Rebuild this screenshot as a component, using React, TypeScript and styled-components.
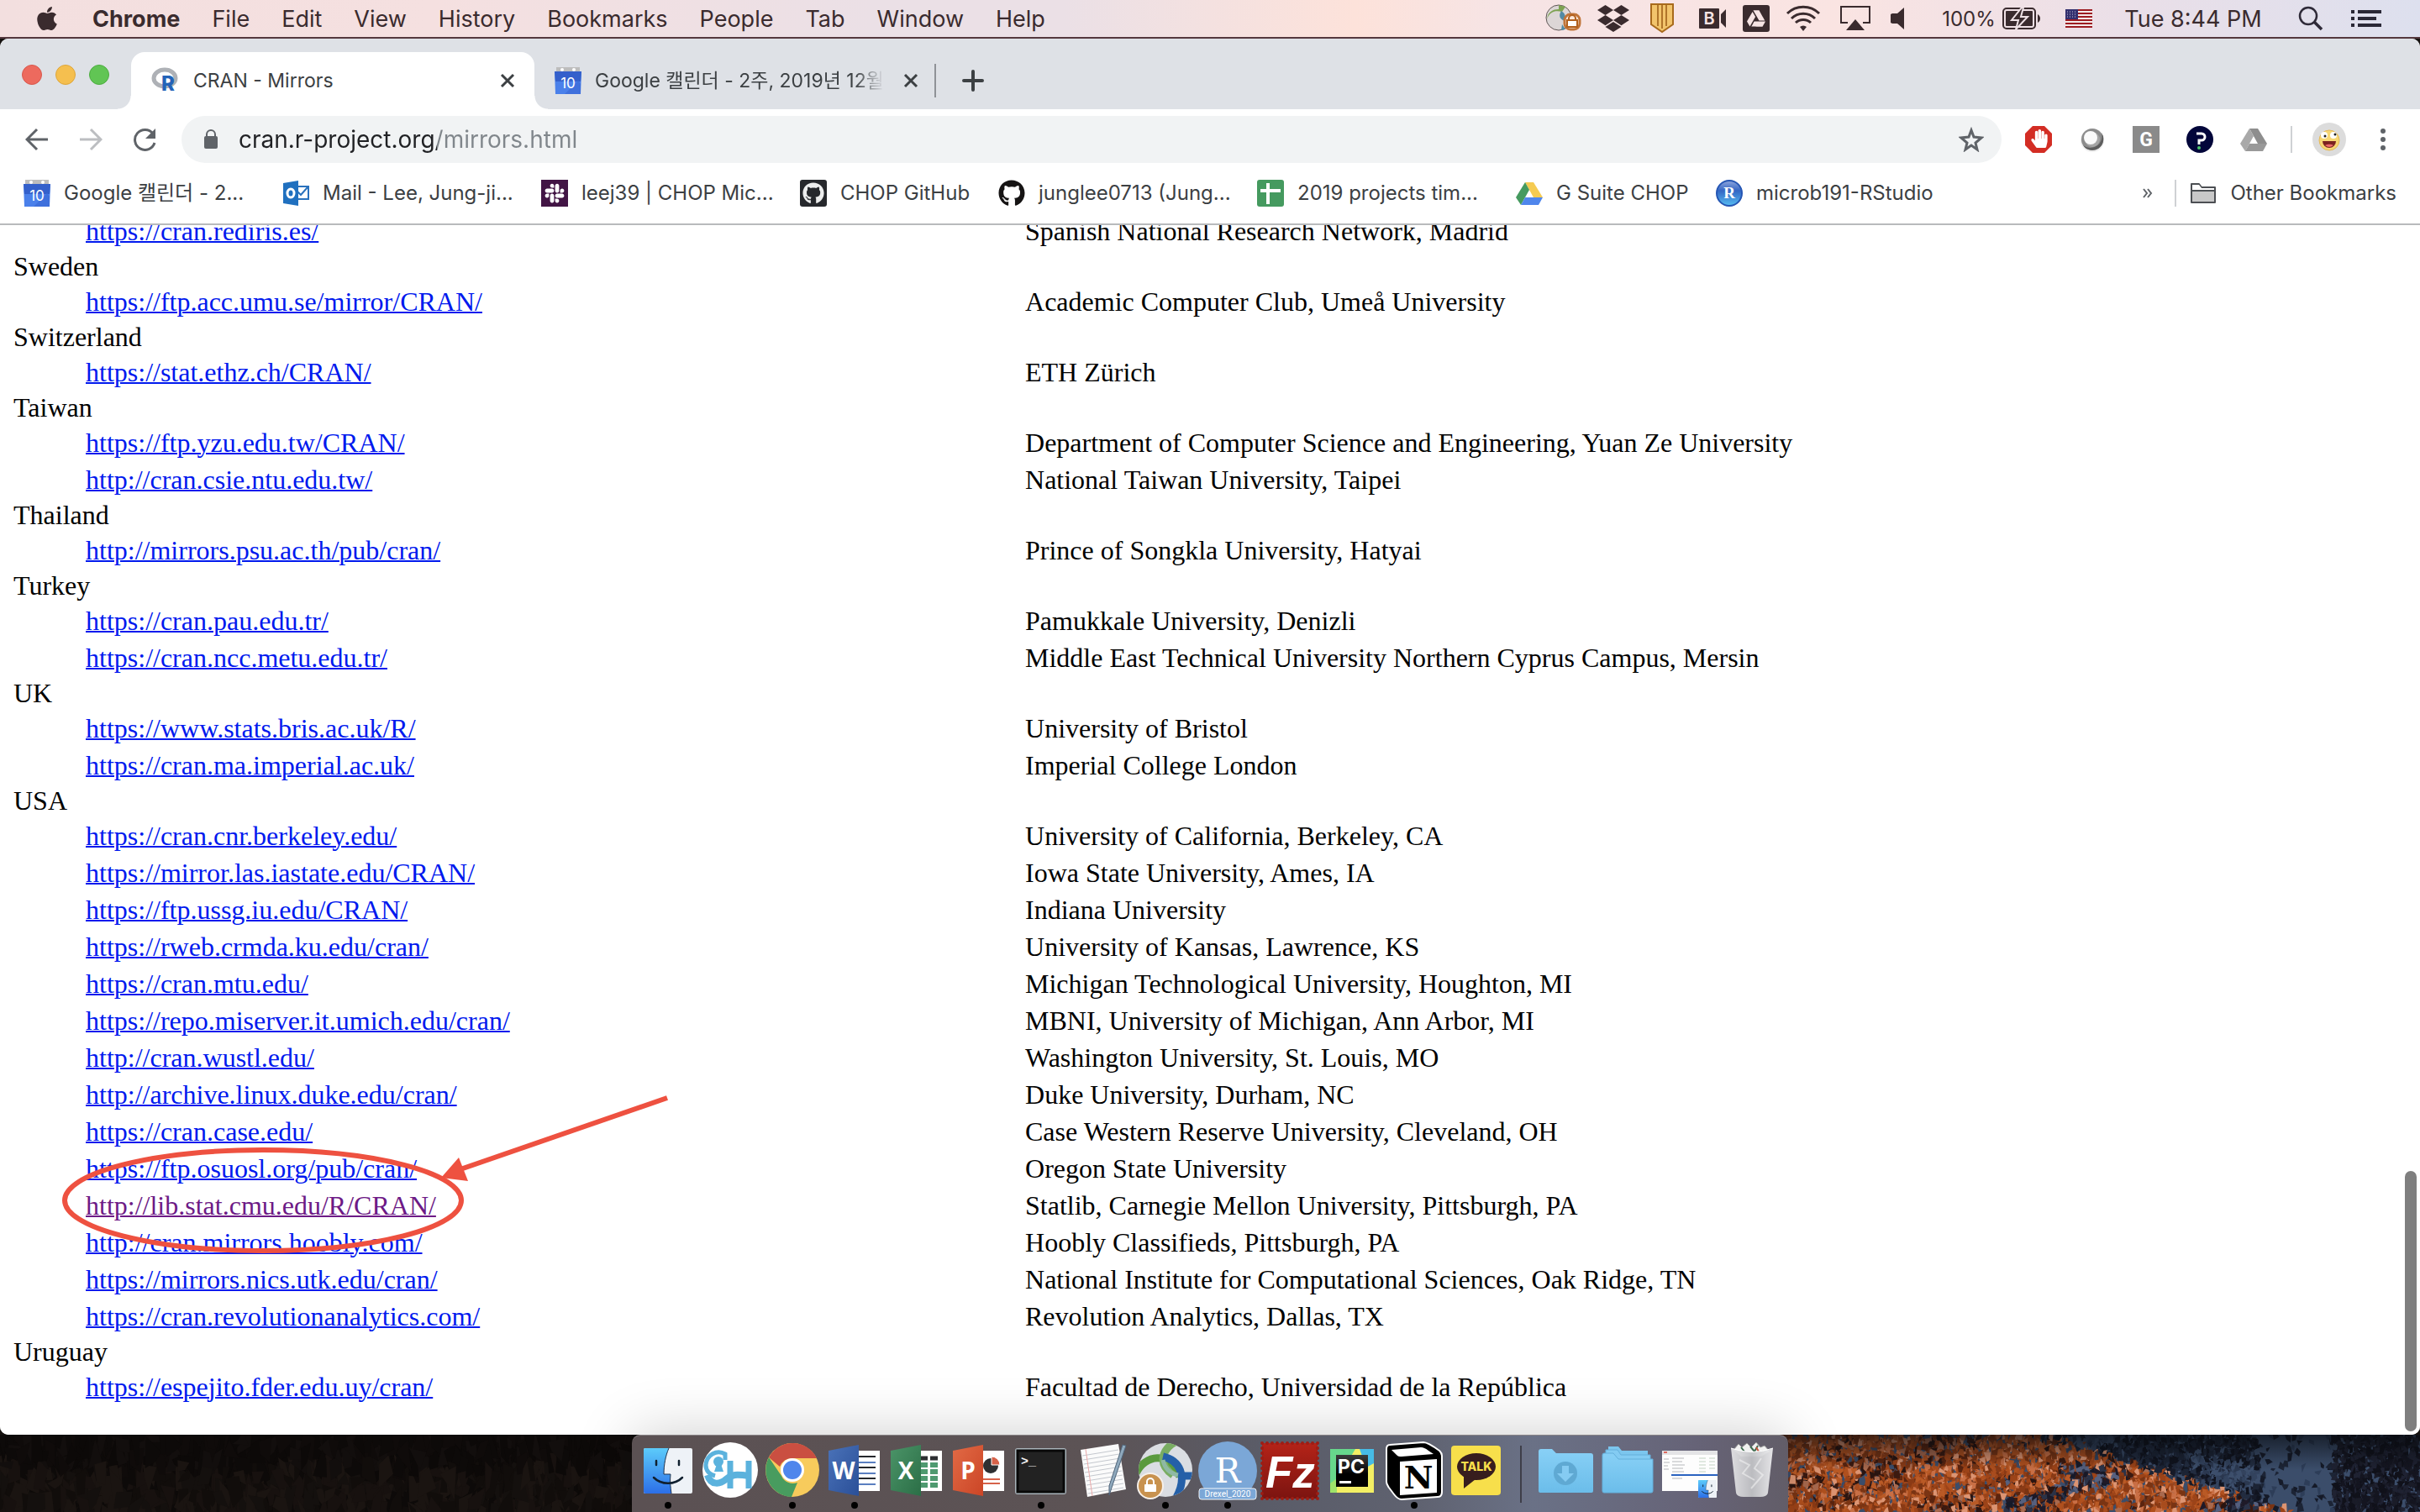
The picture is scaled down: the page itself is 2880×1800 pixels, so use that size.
import React from "react";
import styled, { createGlobalStyle, css } from "styled-components";
import { FaApple, FaDropbox, FaGithub, FaSlack, FaHandPaper } from "react-icons/fa";
import { SiGoogledrive } from "react-icons/si";

const ui = `Inter, "Noto Sans CJK KR", sans-serif`;
const serif = `"Liberation Serif", "Noto Sans CJK KR", serif`;

const GlobalStyle = createGlobalStyle`
  *, *::before, *::after { box-sizing: border-box; }
  body { margin: 0; background: #15110f; }
  svg { display: block; flex: none; }
`;

const Screen = styled.div`
  display: flex;
  flex-direction: column;
  height: 100vh;
  overflow: hidden;
  font-family: ${ui};
`;

const plainButton = css`
  border: 0;
  padding: 0;
  background: none;
  font: inherit;
  color: inherit;
  cursor: default;
`;

/* ---------- menu bar ---------- */

const MenuBar = styled.header`
  flex: none;
  display: flex;
  justify-content: space-between;
  height: 46px;
  padding: 0 32px 0 40px;
  border-bottom: 2px solid #54383e;
  background: linear-gradient(90deg, #f3dfdf 0%, #f5e0e0 18%, #ebe0e6 36%, #ebe0e6 44%, #fde2da 56%, #f6e4e5 62%, #fae4e2 76%, #eadfe8 88%, #dde0ee 100%);
  color: #3a2b2e;
  font-size: 27px;
`;

const Menus = styled.nav`
  display: flex;
  align-items: center;
  gap: 38px;
`;

const Menu = styled.button<{ $strong?: boolean }>`
  ${plainButton}
  display: flex;
  font-weight: ${(p) => (p.$strong ? 700 : 400)};
`;

const StatusArea = styled.div`
  display: flex;
  align-items: center;
`;

const StatusItem = styled.button<{ $width: number }>`
  ${plainButton}
  display: flex;
  align-items: center;
  justify-content: center;
  gap: 8px;
  width: ${(p) => p.$width}px;
  height: 44px;
  white-space: nowrap;
`;

const Percent = styled.span`
  font-size: 24px;
`;

/* ---------- browser window ---------- */

const BrowserWindow = styled.main`
  flex: 1;
  min-height: 0;
  display: flex;
  flex-direction: column;
  border-radius: 10px;
  overflow: hidden;
  background: #fff;
  color: #3c4043;
`;

const TabStrip = styled.div`
  flex: none;
  display: flex;
  align-items: stretch;
  height: 84px;
  padding: 16px 26px 0;
  background: #dee1e6;
`;

const Lights = styled.div`
  display: flex;
  align-items: center;
  gap: 16px;
  padding-bottom: 14px;
  margin-right: 26px;
`;

const Light = styled.button<{ $fill: string; $edge: string }>`
  ${plainButton}
  width: 24px;
  height: 24px;
  border-radius: 50%;
  border: 1px solid ${(p) => p.$edge};
  background: ${(p) => p.$fill};
`;

const Tab = styled.div<{ $active?: boolean }>`
  position: relative;
  display: flex;
  align-items: center;
  gap: 16px;
  width: 480px;
  padding: 0 16px 0 24px;
  font-size: 23px;
  line-height: 32px;
  ${(p) =>
    p.$active &&
    css`
      background: #fff;
      border-radius: 16px 16px 0 0;
      &::before,
      &::after {
        content: "";
        position: absolute;
        bottom: 0;
        width: 16px;
        height: 16px;
      }
      &::before {
        right: 100%;
        background: radial-gradient(circle at 0 0, transparent 15px, #fff 16px);
      }
      &::after {
        left: 100%;
        background: radial-gradient(circle at 100% 0, transparent 15px, #fff 16px);
      }
    `}
`;

const TabTitle = styled.button<{ $fade?: boolean }>`
  ${plainButton}
  flex: 1;
  min-width: 0;
  overflow: hidden;
  white-space: nowrap;
  text-align: left;
  ${(p) => p.$fade && css`mask-image: linear-gradient(90deg, #000 90%, transparent 100%);`}
`;

const IconButton = styled.button`
  ${plainButton}
  flex: none;
  display: flex;
  align-items: center;
  justify-content: center;
  width: 32px;
  height: 32px;
`;

const TabDivider = styled.span`
  align-self: center;
  width: 2px;
  height: 40px;
  margin: 0 28px 0 -4px;
  background: #8f9297;
`;

const NewTab = styled(IconButton)`
  align-self: center;
`;

const Toolbar = styled.div`
  flex: none;
  display: flex;
  align-items: center;
  gap: 28px;
  padding: 8px 28px 0;
`;

const IconGroup = styled.div`
  display: flex;
  align-items: center;
  gap: 32px;
`;

const AddressBar = styled.label`
  flex: 1;
  display: flex;
  align-items: center;
  gap: 24px;
  height: 56px;
  padding: 0 20px 0 26px;
  border-radius: 28px;
  background: #f1f3f4;
`;

const AddressInput = styled.input`
  flex: 1;
  min-width: 0;
  height: 40px;
  padding: 0;
  border: 0;
  outline: 0;
  font-family: ${ui};
  font-size: 28px;
  color: transparent;
  background: linear-gradient(90deg, #202124 236px, #80868b 236px);
  background-clip: text;
`;

const Profile = styled.div`
  display: flex;
  align-items: center;
  gap: 24px;
`;

const ThinLine = styled.span`
  width: 2px;
  height: 32px;
  background: #cfd1d4;
`;

const Avatar = styled(IconButton)`
  width: 40px;
  height: 40px;
`;

const BookmarkBar = styled.nav`
  flex: none;
  display: flex;
  align-items: center;
  gap: 32px;
  height: 74px;
  padding: 0 28px;
  border-bottom: 2px solid #b8babc;
  font-size: 24px;
  line-height: 32px;
`;

const Bookmark = styled.a<{ $width?: number }>`
  display: flex;
  align-items: center;
  gap: 16px;
  width: ${(p) => (p.$width ? `${p.$width}px` : "auto")};
  color: #3c4043;
  text-decoration: none;
  white-space: nowrap;
`;

const BookmarkEnd = styled.div`
  display: flex;
  align-items: center;
  gap: 16px;
  margin-left: auto;
`;

/* ---------- page ---------- */

const Viewport = styled.div`
  position: relative;
  flex: 1;
  min-height: 0;
  display: flex;
  flex-direction: column;
  justify-content: flex-end;
  overflow: hidden;
  padding: 0 20px 33px 16px;
  background: #fff;
  color: #000;
  font-family: ${serif};
  font-size: 32px;
  line-height: 36px;
`;

const MirrorList = styled.dl`
  flex: none;
  margin: 0;
`;

const Country = styled.dt``;

const MirrorGroup = styled.dd`
  margin: 0 0 0 80px;
`;

const MirrorTable = styled.table`
  width: 90%;
  table-layout: fixed;
  border-spacing: 4px;
`;

const MirrorCell = styled.td<{ $share: number }>`
  width: ${(p) => p.$share}%;
  padding: 2px;
  white-space: nowrap;
`;

const MirrorLink = styled.a<{ $visited?: boolean }>`
  color: ${(p) => (p.$visited ? "#6d1a86" : "#0019ee")};
  text-decoration: underline;
  text-decoration-thickness: 2px;
`;

const ScrollThumb = styled.div`
  position: absolute;
  right: 4px;
  bottom: 4px;
  width: 14px;
  height: 310px;
  border-radius: 7px;
  background: #7f7f7f;
`;

const Annotation = styled.svg`
  position: absolute;
  left: 60px;
  bottom: 208px;
`;

/* ---------- dock ---------- */

const Desktop = styled.footer`
  flex: none;
  display: flex;
  height: 92px;
  background: linear-gradient(90deg, #0d0a09 50%, #3a2018 50%);
`;

const Scenery = styled.svg`
  flex: 1 1 0;
  min-width: 0;
  height: 92px;
`;

const Dock = styled.div`
  position: relative;
  display: flex;
  padding: 0 6px;
  border-radius: 10px 10px 0 0;
  border-top: 1px solid #8a8587;
  background: linear-gradient(90deg, #5b5153 0%, #5c5355 40%, #5a5c68 55%, #5f6270 68%, #6a7186 78%, #666377 92%, #625d68 100%);
  box-shadow: 0 0 70px rgba(0, 0, 0, 0.2);
`;

const DockItem = styled.button`
  ${plainButton}
  display: flex;
  flex-direction: column;
  align-items: center;
  width: 74px;
`;

const RunningDot = styled.span`
  width: 8px;
  height: 8px;
  border-radius: 50%;
  background: #000;
`;

const DockDivider = styled.span`
  width: 2px;
  height: 68px;
  margin: 12px 15px 0;
  background: #3e3e49;
`;

/* ---------- small icons ---------- */

const Calendar = () => (
  <svg width="32" height="32" viewBox="0 0 32 32">
    <path d="M2 0h28v6H2z" fill="#bdbdbd" />
    <circle cx="9" cy="3" r="2" fill="#fff" />
    <circle cx="23" cy="3" r="2" fill="#fff" />
    <path d="M0 5h32l-1 27H1z" fill="#4a80ea" />
    <path d="M0 5h32l-1 12H1z" fill="#3460cb" />
    <path d="M20 24l8-8 3 4v12H12z" fill="#3f70dc" />
    <text x="16" y="25" textAnchor="middle" fontFamily={ui} fontSize="17" fill="#fff">10</text>
  </svg>
);

const RLogo = () => (
  <svg width="34" height="36" viewBox="0 0 34 36">
    <ellipse cx="16" cy="15" rx="13" ry="10" fill="none" stroke="#aeb1b6" strokeWidth="5" />
    <text x="12" y="30" fontFamily="Inter, sans-serif" fontWeight="800" fontSize="24" fill="#2363b8">R</text>
  </svg>
);

const Outlook = () => (
  <svg width="32" height="32" viewBox="0 0 32 32">
    <path d="M16 8h15v15H16z" fill="#fff" stroke="#2a72bd" strokeWidth="2" />
    <path d="M17 13l5 5 8-9" fill="none" stroke="#2a72bd" strokeWidth="2" />
    <path d="M1 4l18-3v30L1 28z" fill="#2070bf" />
    <ellipse cx="10" cy="16" rx="4" ry="5" fill="none" stroke="#fff" strokeWidth="3" />
  </svg>
);

const SlackTile = () => (
  <svg width="32" height="32" viewBox="0 0 32 32">
    <rect width="32" height="32" fill="#421545" />
    <FaSlack x="3" y="3" size={26} color="#fff" />
  </svg>
);

const GithubTile = () => (
  <svg width="32" height="32" viewBox="0 0 32 32">
    <rect width="32" height="32" rx="3" fill="#26282c" />
    <FaGithub x="3" y="3" size={26} color="#eceded" />
  </svg>
);

const Sheets = () => (
  <svg width="32" height="32" viewBox="0 0 32 32">
    <rect width="32" height="32" rx="3" fill="#459a5f" />
    <path d="M11 4h4v7h13v4H15v14h-4V15H4v-4h7z" fill="#fff" />
  </svg>
);

const DriveColor = ({ grey }: { grey?: boolean }) => (
  <svg width="32" height="32" viewBox="0 0 32 32">
    <path d="M11 3h10l11 18H21z" fill={grey ? "#8e8e8e" : "#f5cb52"} />
    <path d="M11 3l5 9L6 30 0 21z" fill={grey ? "#a9a9a9" : "#459a5f"} />
    <path d="M11 21h21l-5 9H6z" fill={grey ? "#999" : "#4f86ec"} />
  </svg>
);

const RStudioOrb = () => (
  <svg width="32" height="32" viewBox="0 0 32 32">
    <defs>
      <linearGradient id="orb" x1="0" y1="0" x2="0" y2="1">
        <stop offset="0" stopColor="#8fa6dc" />
        <stop offset=".4" stopColor="#3366c4" />
        <stop offset="1" stopColor="#57bdf2" />
      </linearGradient>
    </defs>
    <circle cx="16" cy="16" r="15" fill="url(#orb)" stroke="#2556b4" strokeWidth="2" />
    <text x="16" y="22" textAnchor="middle" fontFamily="Liberation Serif, serif" fontWeight="700" fontSize="19" fill="#fff">R</text>
  </svg>
);

const Folder = () => (
  <svg width="32" height="26" viewBox="0 0 32 26">
    <path d="M2 2h9l3 4h16v18H2z" fill="#c8c8c8" stroke="#4c4f53" strokeWidth="2" strokeLinejoin="round" />
    <path d="M3 3h8l3 4h15v2H3z" fill="#fff" />
    <path d="M2 10h28" stroke="#4c4f53" strokeWidth="2" />
  </svg>
);

const Close = () => (
  <svg width="18" height="18" viewBox="0 0 18 18">
    <path d="M2 2l14 14M16 2L2 16" stroke="#3c4043" strokeWidth="3" />
  </svg>
);

const Plus = () => (
  <svg width="26" height="26" viewBox="0 0 26 26">
    <path d="M13 2v22M2 13h22" stroke="#3c4043" strokeWidth="4" strokeLinecap="round" />
  </svg>
);

const Arrow = ({ forward }: { forward?: boolean }) => (
  <svg width="28" height="28" viewBox="0 0 28 28">
    <path
      d={forward ? "M1 14h24M14 2l12 12-12 12" : "M27 14H3M14 2L2 14l12 12"}
      fill="none"
      stroke={forward ? "#bcbec1" : "#5f6368"}
      strokeWidth="3"
    />
  </svg>
);

const Reload = () => (
  <svg width="30" height="30" viewBox="0 0 30 30">
    <path d="M25 8a12 12 0 1 0 2 11" fill="none" stroke="#5f6368" strokeWidth="3" />
    <path d="M28 2v12H16z" fill="#5f6368" />
  </svg>
);

const Lock = () => (
  <svg width="18" height="24" viewBox="0 0 18 24">
    <path d="M4 10V6a5 5 0 0 1 10 0v4" fill="none" stroke="#5f6368" strokeWidth="2" />
    <rect x="1" y="8" width="16" height="15" rx="2" fill="#5f6368" />
  </svg>
);

const Star = () => (
  <svg width="30" height="30" viewBox="0 0 30 30">
    <path d="M15 4l3 8 9 1-7 6 2 8-7-5-7 5 2-8-7-6 9-1z" fill="none" stroke="#5f6368" strokeWidth="3" />
  </svg>
);

const AdBlock = () => (
  <svg width="32" height="32" viewBox="0 0 32 32">
    <path d="M9 0h14l9 9v14l-9 9H9l-9-9V9z" fill="#d32d24" />
    <FaHandPaper x="6" y="4" size={22} color="#fff" />
  </svg>
);

const GreyOrb = () => (
  <svg width="32" height="32" viewBox="0 0 32 32">
    <circle cx="16" cy="17" r="14" fill="#eee" />
    <circle cx="16" cy="16" r="13" fill="#8c8c8c" />
    <path d="M27 8a13 13 0 0 1-22 15 14 14 0 0 0 22-15z" fill="#5e5e5e" />
    <circle cx="16" cy="16" r="9" fill="#a6a6a6" />
    <circle cx="14" cy="14" r="8" fill="#fafafa" />
  </svg>
);

const GTile = () => (
  <svg width="32" height="32" viewBox="0 0 32 32">
    <rect width="32" height="32" fill="#8a8a8a" />
    <text x="16" y="24" textAnchor="middle" fontFamily="Roboto, sans-serif" fontWeight="700" fontSize="23" fill="#fff">G</text>
  </svg>
);

const QuestionOrb = () => (
  <svg width="32" height="32" viewBox="0 0 32 32">
    <circle cx="16" cy="16" r="16" fill="#02063a" />
    <path d="M12 9h6a4 4 0 0 1 0 8h-3v5" fill="none" stroke="#fff" strokeWidth="3" />
    <circle cx="15" cy="26" r="2" fill="#4cc76a" />
  </svg>
);

const Smiley = () => (
  <svg width="40" height="40" viewBox="0 0 40 40">
    <circle cx="20" cy="20" r="20" fill="#dcdcdc" />
    <circle cx="20" cy="21" r="12" fill="#f7d774" stroke="#e5b95a" strokeWidth="1" />
    <circle cx="14" cy="15" r="4" fill="#fff" />
    <circle cx="25" cy="15" r="4" fill="#fff" />
    <circle cx="15" cy="16" r="1.5" fill="#222" />
    <circle cx="27" cy="14" r="1.5" fill="#222" />
    <path d="M12 22h16a8 8 0 0 1-16 0z" fill="#7c2320" />
    <path d="M15 27a7 4 0 0 1 10 0 8 8 0 0 1-10 0z" fill="#ee6a6a" />
  </svg>
);

const Dots = () => (
  <svg width="8" height="28" viewBox="0 0 8 28" fill="#5f6368">
    <circle cx="4" cy="4" r="3" />
    <circle cx="4" cy="14" r="3" />
    <circle cx="4" cy="24" r="3" />
  </svg>
);

const Chevrons = () => (
  <svg width="12" height="12" viewBox="0 0 12 12">
    <path d="M1 1l4 5-4 5M6 1l4 5-4 5" fill="none" stroke="#5f6368" strokeWidth="2" />
  </svg>
);

/* ---------- menu bar icons ---------- */

const VpnStatus = () => (
  <svg width="44" height="34" viewBox="0 0 44 34">
    <circle cx="16" cy="16" r="15" fill="#dcd6d6" stroke="#5f5655" strokeWidth="1" />
    <path d="M2 18C5 8 13 7 20 9l4-6-8-2v5C9 6 3 9 2 18z" fill="#7da252" />
    <path d="M19 8c-4 6-1 11 5 12 0-6 0-9-5-12zM20 24l4 6-5 1z" fill="#528aa4" />
    <rect x="23" y="12" width="18" height="18" rx="7" fill="#fbe6d8" stroke="#c0753a" strokeWidth="3" />
    <path d="M28 19v-2a4 4 0 0 1 8 0v2" fill="none" stroke="#b2611f" strokeWidth="2" />
    <rect x="26" y="19" width="12" height="8" fill="#fff" stroke="#b2611f" strokeWidth="2" />
  </svg>
);

const ShieldStatus = () => (
  <svg width="30" height="36" viewBox="0 0 30 36">
    <path d="M2 1h26v24L15 34 2 25z" fill="#f2c46c" stroke="#a86a1c" strokeWidth="2" />
    <path d="M10 2v25M15 2v28M20 2v25" stroke="#b0752a" strokeWidth="2" />
  </svg>
);

const RecordStatus = () => (
  <svg width="32" height="26" viewBox="0 0 32 26">
    <rect y="1" width="24" height="24" rx="1" fill="#3a2b2e" />
    <text x="12" y="20" textAnchor="middle" fontFamily={ui} fontWeight="600" fontSize="20" fill="#f6e4e4">B</text>
    <path d="M26 8l6-6v22l-6-6z" fill="#3a2b2e" />
  </svg>
);

const DriveStatus = () => (
  <svg width="32" height="32" viewBox="0 0 32 32">
    <rect width="32" height="32" rx="3" fill="#3a2b2e" />
    <SiGoogledrive x="5" y="5" size={22} color="#f6e4e4" />
  </svg>
);

const WifiStatus = () => (
  <svg width="42" height="32" viewBox="0 0 42 32" fill="none" stroke="#3a2b2e" strokeWidth="3">
    <path d="M2 10a27 27 0 0 1 38 0M7 16a20 20 0 0 1 28 0M12 21a13 13 0 0 1 18 0" />
    <path d="M17 26a6 6 0 0 1 8 0l-4 5z" fill="#3a2b2e" stroke="none" />
  </svg>
);

const AirPlayStatus = () => (
  <svg width="36" height="30" viewBox="0 0 36 30">
    <path d="M9 20H1V1h34v19h-8" fill="none" stroke="#3a2b2e" strokeWidth="2" />
    <path d="M18 16l11 13H7z" fill="#3a2b2e" />
  </svg>
);

const SpeakerStatus = () => (
  <svg width="32" height="26" viewBox="0 0 32 26">
    <path d="M0 8l2-1h6l8-7v26l-8-7H2l-2-1z" fill="#3a2b2e" />
  </svg>
);

const BatteryStatus = () => (
  <svg width="46" height="26" viewBox="0 0 46 26">
    <rect x="1" y="1" width="38" height="24" rx="4" fill="none" stroke="#3a2b2e" strokeWidth="2" />
    <rect x="4" y="4" width="32" height="18" rx="1" fill="#3a2b2e" />
    <path d="M42 8c4 2 4 8 0 10z" fill="#3a2b2e" />
    <path d="M23 0L11 15h8l-3 11 14-15h-8l3-11z" fill="#3a2b2e" stroke="#efe2e6" strokeWidth="2" />
  </svg>
);

const FlagStatus = () => (
  <svg width="32" height="22" viewBox="0 0 32 22">
    <rect width="32" height="22" fill="#f4eaea" />
    {[0, 4, 8, 12, 16, 20].map((y) => (
      <rect key={y} y={y} width="32" height="2" fill="#9c1c22" />
    ))}
    <rect width="15" height="12" fill="#33306f" />
    <path d="M2 3h12M2 6h12M2 9h12" stroke="#c9c7dd" strokeWidth="1" strokeDasharray="1 2" />
  </svg>
);

const SearchStatus = () => (
  <svg width="30" height="30" viewBox="0 0 30 30" fill="none" stroke="#2e2a38">
    <circle cx="12" cy="12" r="10" strokeWidth="2.5" />
    <path d="M19 19l9 9" strokeWidth="3.5" />
  </svg>
);

const ListStatus = () => (
  <svg width="36" height="20" viewBox="0 0 36 20" fill="#2a2836">
    <path d="M0 0h4v4H0zM0 8h4v4H0zM0 16h4v4H0zM8 0h28v4H8zM8 8h22v4H8zM8 16h28v4H8z" />
  </svg>
);

/* ---------- dock icons ---------- */

const dockSize = { width: 74, height: 79, viewBox: "0 1 74 79" };

const FinderFace = () => (
  <>
    <defs>
      <linearGradient id="finderLeft" x1="0" y1="0" x2="0" y2="1">
        <stop offset="0" stopColor="#5ccbfa" />
        <stop offset="1" stopColor="#2c6fe8" />
      </linearGradient>
    </defs>
    <rect x="8" y="16" width="58" height="54" rx="2" fill="#eef2f7" />
    <path d="M10 16h28c-4 9-6 20-6 31h8c-1 8 0 16 1 23H10a2 2 0 0 1-2-2V18a2 2 0 0 1 2-2z" fill="url(#finderLeft)" />
    <path d="M38 16c-4 9-6 20-6 31h8c-1 8 0 16 1 23" fill="none" stroke="#20344e" strokeWidth="1" />
    <path d="M23 31v5M50 31v5" stroke="#10202f" strokeWidth="2.5" strokeLinecap="round" />
    <path d="M20 51c9 9 25 9 34 0" fill="none" stroke="#10202f" strokeWidth="2.5" strokeLinecap="round" />
  </>
);

const Finder = () => <svg {...dockSize}><FinderFace /></svg>;

const Chop = () => (
  <svg {...dockSize}>
    <circle cx="37" cy="42" r="33" fill="#fff" />
    <g fill="none" stroke="#5bb2dd">
      <path d="M31 30V23C21 17 9 24 8 36c0 7 4 11 11 13" strokeWidth="5" />
      <path d="M10 48c4 13 15 11 22 5s12-6 28-4" strokeWidth="8" />
      <path d="M37 31v33M59 31v33" strokeWidth="7" />
    </g>
    <circle cx="23" cy="32" r="6" fill="#5bb2dd" />
    <path d="M18 44h11l-3-9h-5z" fill="#5bb2dd" />
  </svg>
);

const Chrome = () => (
  <svg {...dockSize}>
    <circle cx="37" cy="42" r="32" fill="#f7cb5c" />
    <path d="M9 27A32 32 0 0 1 66 28H37a15 15 0 0 0-15 10z" fill="#ca4f41" />
    <path d="M9 27l15 22a15 15 0 0 0 19 8L36 74A32 32 0 0 1 9 27z" fill="#489c5f" />
    <circle cx="37" cy="42" r="14" fill="#fff" />
    <circle cx="37" cy="42" r="11" fill="#4f86ec" />
  </svg>
);

type OfficeProps = { letter: string; from: string; to: string; children: React.ReactNode };

const Office = ({ letter, from, to, children }: OfficeProps) => (
  <svg {...dockSize}>
    <defs>
      <linearGradient id={`office${letter}`} x1="0" y1="0" x2="1" y2="1">
        <stop offset="0" stopColor={from} />
        <stop offset="1" stopColor={to} />
      </linearGradient>
    </defs>
    <rect x="40" y="19" width="27" height="48" fill="#fff" />
    {children}
    <path d="M6 19l36-7v61L6 66z" fill={`url(#office${letter})`} />
    <text x="24" y="53" textAnchor="middle" fontFamily="Open Sans, sans-serif" fontWeight="700" fontSize="28" fill="#fff">{letter}</text>
  </svg>
);

const Word = () => (
  <Office letter="W" from="#4a72b8" to="#2a4f98">
    <path d="M42 26h20M42 39h20M42 52h20" stroke="#26282c" strokeWidth="2" />
    <path d="M42 33h20M42 46h20M42 59h20" stroke="#5a7fc0" strokeWidth="2" />
  </Office>
);

const Excel = () => (
  <Office letter="X" from="#4b9468" to="#2b6e46">
    <path d="M42 28h8M53 28h9" stroke="#2d2f32" strokeWidth="5" />
    <path d="M42 36h8M53 36h9M42 44h8M53 44h9M42 52h8M53 52h9M42 60h8M53 60h9" stroke="#4f9a70" strokeWidth="6" />
  </Office>
);

const PowerPoint = () => (
  <Office letter="P" from="#e26a45" to="#cb4526">
    <circle cx="51" cy="37" r="9" fill="#2d2f32" />
    <path d="M52 36V26a10 10 0 0 1 10 10z" fill="#d6624a" stroke="#fff" strokeWidth="1" />
    <path d="M42 53h20M42 58h20" stroke="#d6624a" strokeWidth="2" />
  </Office>
);

const Terminal = () => (
  <svg {...dockSize}>
    <rect x="7" y="17" width="59" height="53" rx="2" fill="#222" stroke="#a9b4ba" strokeWidth="2" />
    <rect x="9" y="19" width="55" height="49" fill="none" stroke="#080808" strokeWidth="3" />
    <text x="13" y="36" fontFamily="Liberation Mono, monospace" fontWeight="700" fontSize="15" fill="#f2f2f2">&gt;_</text>
  </svg>
);

const TextEdit = () => (
  <svg {...dockSize}>
    <path d="M10 18l45-7 9 54-46 9z" fill="#fbfbfb" />
    <path d="M12 25l43-7M13 30l43-7M14 35l43-7M14 40l43-7M15 45l43-7M16 50l43-7M17 55l43-7M17 60l43-7M18 65l43-7M19 70l42-7" stroke="#c4c8ce" strokeWidth="1" />
    <path d="M16 17l8 56" stroke="#eaa8a8" strokeWidth="1" />
    <path d="M60 12l4 1-17 50-3 9 0-11z" fill="#8fa9bd" stroke="#50657a" strokeWidth="1" />
  </svg>
);

const Padlock = ({ x, y }: { x: number; y: number }) => (
  <g transform={`translate(${x} ${y})`}>
    <path d="M-4 0v-4a4 4 0 0 1 8 0v4" fill="none" stroke="#fff" strokeWidth="2" />
    <rect x="-7" y="-1" width="14" height="9" rx="1" fill="#fff" />
  </g>
);

const AnyConnect = () => (
  <svg {...dockSize}>
    <defs>
      <clipPath id="globe"><circle cx="37" cy="42" r="32" /></clipPath>
    </defs>
    <circle cx="37" cy="42" r="32" fill="#dadde2" />
    <g clipPath="url(#globe)" fill="none" strokeWidth="9">
      <path d="M2 46C12 24 42 18 54 50" stroke="#5a9a3e" />
      <path d="M50 8C34 16 26 34 46 48" stroke="#79ad62" />
      <path d="M34 26c18 4 32 22 14 52M54 49h18" stroke="#2560a8" />
      <path d="M34 30c2 10 8 16 18 18" stroke="#8fb9a4" strokeWidth="5" />
    </g>
    <circle cx="19" cy="61" r="15" fill="#c8924f" stroke="#f6f0ea" strokeWidth="2" />
    <Padlock x={19} y={60} />
  </svg>
);

const RStudio = () => (
  <svg {...dockSize}>
    <circle cx="37" cy="43" r="35" fill="#7ba7d7" />
    <text x="37" y="57" textAnchor="middle" fontFamily="DejaVu Serif, serif" fontSize="41" fill="#fff">R</text>
    <rect x="3" y="64" width="68" height="13" rx="3" fill="#7ba7d7" stroke="#f2f6fb" strokeWidth="1" />
    <text x="37" y="74" textAnchor="middle" fontFamily="Roboto, sans-serif" fontSize="10" fill="#fff">Drexel_2020</text>
  </svg>
);

const FileZilla = () => (
  <svg {...dockSize}>
    <defs>
      <linearGradient id="zilla" x1="0" y1="0" x2="0" y2="1">
        <stop offset="0" stopColor="#b42318" />
        <stop offset="1" stopColor="#7c1410" />
      </linearGradient>
    </defs>
    <rect x="4" y="10" width="66" height="66" fill="url(#zilla)" />
    <rect x="4" y="10" width="66" height="66" fill="none" stroke="#9c1d15" strokeWidth="4" strokeDasharray="0 6" strokeLinecap="round" />
    <text x="8" y="63" fontFamily="Liberation Sans, sans-serif" fontWeight="700" fontStyle="italic" fontSize="53" fill="#fff">Fz</text>
  </svg>
);

const PyCharm = () => (
  <svg {...dockSize}>
    <defs>
      <linearGradient id="pyShade" x1="0" y1="0" x2="0" y2="1">
        <stop offset="0" stopColor="#3c3c3c" />
        <stop offset=".6" stopColor="#000" />
      </linearGradient>
    </defs>
    <rect x="11" y="17" width="52" height="52" fill="#f3ef64" />
    <path d="M11 17h30L18 55l-7 5z" fill="#67d78c" />
    <path d="M11 58l8-6v17h-8z" fill="#9ee36a" />
    <path d="M46 17h17v17l-9 5z" fill="#46bbe6" />
    <rect x="18" y="24" width="38" height="38" fill="url(#pyShade)" />
    <text x="20" y="46" fontFamily={ui} fontWeight="700" fontSize="23" fill="#fff">PC</text>
    <rect x="22" y="55" width="14" height="3" fill="#fff" />
  </svg>
);

const Notion = () => (
  <svg {...dockSize}>
    <path d="M8 12l40-3c4 0 8 2 19 10 2 2 3 3 3 6v43c0 4-1 6-5 6l-43 3c-4 0-6-2-9-6l-6-8c-2-3-3-4-3-7V17c0-3 1-5 4-5z" fill="#000" stroke="#fff" strokeWidth="2" />
    <path d="M10 18l35-3c3 0 5 1 9 4l6 4-38 3c-3 0-4 0-6-2z" fill="#fff" />
    <path d="M20 32l44-3v40l-44 3z" fill="#fff" />
    <text x="42" y="64" textAnchor="middle" fontFamily="DejaVu Serif, serif" fontWeight="700" fontSize="38" fill="#000">N</text>
  </svg>
);

const KakaoTalk = () => (
  <svg {...dockSize}>
    <rect x="7" y="13" width="59" height="59" rx="4" fill="#f7df4b" />
    <ellipse cx="37" cy="38" rx="23" ry="16" fill="#371d1e" />
    <path d="M22 48l0 16 14-11z" fill="#371d1e" />
    <text x="37" y="43" textAnchor="middle" fontFamily={ui} fontWeight="800" fontSize="14" fill="#f7df4b">TALK</text>
  </svg>
);

const FolderPaint = () => (
  <defs>
    <linearGradient id="folderFill" x1="0" y1="0" x2="0" y2="1">
      <stop offset="0" stopColor="#88d0f6" />
      <stop offset="1" stopColor="#6bbdea" />
    </linearGradient>
  </defs>
);

const Downloads = () => (
  <svg {...dockSize}>
    <FolderPaint />
    <path d="M5 20a3 3 0 0 1 3-3h13l5 5h41a3 3 0 0 1 3 3v42a2 2 0 0 1-2 2H7a2 2 0 0 1-2-2z" fill="url(#folderFill)" />
    <circle cx="37" cy="46" r="14" fill="#5fa9d3" />
    <path d="M33 37h8v9h6L37 56 27 46h6z" fill="#85cbf2" />
  </svg>
);

const FolderStack = () => (
  <svg {...dockSize}>
    <FolderPaint />
    <path d="M14 14h12l4 5h31v20H14z" fill="#7cc6ee" />
    <path d="M11 18h14l4 6h35v20H11z" fill="#83cbf2" stroke="#64b0dc" strokeWidth="1" />
    <path d="M7 24a2 2 0 0 1 2-2h11l6 7h41v38a2 2 0 0 1-2 2H9a2 2 0 0 1-2-2z" fill="url(#folderFill)" stroke="#64b0dc" strokeWidth="1" />
  </svg>
);

const MiniWindow = () => (
  <svg {...dockSize}>
    <rect x="4" y="19" width="66" height="48" fill="#fdfdfd" />
    <rect x="4" y="19" width="66" height="5" fill="#e4e4e6" />
    <path d="M6 21h4" stroke="#dd6a5f" strokeWidth="2" />
    <path d="M6 29h6M6 33h7M6 37h5M6 41h6M16 28h14M16 32h12M16 36h15M16 40h13M16 44h14M16 52h12" stroke="#b5b7ba" strokeWidth="1" />
    <path d="M48 28h8M60 28h7M48 32h8M60 32h7M48 36h8M60 36h7M48 40h8M60 40h7M48 44h8" stroke="#c3d3c3" strokeWidth="1" />
    <rect x="15" y="47" width="55" height="2" fill="#2b63c0" />
    <svg x="47" y="54" width="22" height="21" viewBox="8 16 58 54" preserveAspectRatio="none"><FinderFace /></svg>
  </svg>
);

const Trash = () => (
  <svg {...dockSize}>
    <defs>
      <linearGradient id="bin" x1="0" y1="0" x2="1" y2="0">
        <stop offset="0" stopColor="#e6e6e8" />
        <stop offset=".5" stopColor="#c2c3c6" />
        <stop offset="1" stopColor="#eeeef0" />
      </linearGradient>
    </defs>
    <path d="M15 18l6-7 4 4 6-5 5 5 6-6 5 6 5-2 6 7-10 6H24z" fill="#f1f1f1" stroke="#999" strokeWidth="1" />
    <path d="M24 15l4 5M35 14l5 6 4-7" stroke="#3d6b4e" strokeWidth="2" fill="none" />
    <path d="M42 15l3 5" stroke="#c8553c" strokeWidth="2" />
    <path d="M12 16q25 9 50 0l-6 53q-1 5-9 5H27q-8 0-9-5z" fill="url(#bin)" fillOpacity=".93" />
    <path d="M12 16q25 9 50 0" fill="none" stroke="#fff" strokeWidth="1" />
    <path d="M22 30l12 6-8 10 14 8M48 28l-8 12 10 8-14 16" fill="none" stroke="#fafafa" strokeWidth="2" strokeOpacity=".5" />
  </svg>
);

/* ---------- desktop scenery ---------- */

const makeRandom = (seed: number) => () => {
  seed = (seed * 16807) % 2147483647;
  return seed / 2147483647;
};

type Shard = { d: string; fill: string };

const shard = (r: () => number, x: number, y: number, w: number, h: number) =>
  `M${(x - w * r()).toFixed(1)} ${(y - h * r()).toFixed(1)}L${(x + w * r()).toFixed(1)} ${(y - h * r()).toFixed(1)}L${(x + w * r()).toFixed(1)} ${(y + h * r()).toFixed(1)}L${(x - w * r()).toFixed(1)} ${(y + h * r()).toFixed(1)}Z`;

const pick = (r: () => number, list: string[]) => list[Math.floor(r() * list.length)];

const brightLeaves = ["#b0501e", "#9c4318", "#b95a26", "#a84c1e", "#c96f45", "#dc9472", "#8a3a15", "#7a3413"];
const shadedLeaves = ["#5a240f", "#3c1a10", "#7a3413", "#2a1511", "#9c4318", "#a8694e"];

const foliage = (): Shard[] => {
  const r = makeRandom(77);
  const out: Shard[] = [];
  for (let i = 0; i < 6000; i++) {
    const x = r() * 752;
    const y = r() * 92;
    const slope = 300 + y * 3.2 + (r() - 0.5) * 40;
    const light = Math.sin(x / 19 + Math.sin(y / 11) * 2) + Math.sin(y / 15 + x / 47) + (r() - 0.5) * 2.4;
    let fill = "";
    if (x < slope) {
      if (x > 235 && light < -1.2) fill = pick(r, ["#161a28", "#2b3247", "#56607e", "#1f1a28"]);
      else fill = pick(r, light > -0.6 ? brightLeaves : shadedLeaves);
    } else if (x < 560) {
      fill = light > 0.9
        ? pick(r, ["#33435e", "#3d4f6c", "#2b3850"])
        : pick(r, ["#161a28", "#10131e", "#1c2435", "#222c40"]);
    } else if (x < 650) {
      if (r() < 0.9) continue;
      fill = pick(r, ["#1c2435", "#2d3d58", "#151a28"]);
    } else {
      fill = pick(r, ["#141520", "#1a1c28", "#10111a", "#1f2232"]);
    }
    out.push({ d: shard(r, x, y, 5, 6), fill });
  }
  return out;
};

const rocks = (): Shard[] => {
  const r = makeRandom(31);
  const out: Shard[] = [];
  for (let i = 0; i < 900; i++) {
    const x = r() * 752;
    const y = r() * 100;
    const fill = y > 40
      ? pick(r, ["#17110f", "#14100e", "#110d0b", "#1a1411"])
      : pick(r, ["#0c0908", "#0f0b0a", "#0d0a09", "#120e0d"]);
    out.push({ d: shard(r, x, y, 12, 22), fill });
  }
  return out;
};

const leafShards = foliage();
const rockShards = rocks();

const Rocks = () => (
  <Scenery viewBox="0 0 752 92" preserveAspectRatio="xMidYMid slice" aria-hidden="true">
    <rect width="752" height="92" fill="#0d0a09" />
    {rockShards.map((s, i) => <path key={i} d={s.d} fill={s.fill} />)}
  </Scenery>
);

const Foliage = () => (
  <Scenery viewBox="0 0 752 92" preserveAspectRatio="xMidYMid slice" aria-hidden="true">
    <defs>
      <linearGradient id="dusk" x1="0" y1="0" x2="0" y2="1">
        <stop offset="0" stopColor="#06090d" stopOpacity=".65" />
        <stop offset=".45" stopColor="#06090d" stopOpacity="0" />
      </linearGradient>
    </defs>
    <rect width="752" height="92" fill="#3b4d6a" />
    {leafShards.map((s, i) => <path key={i} d={s.d} fill={s.fill} />)}
    <rect width="752" height="92" fill="url(#dusk)" />
  </Scenery>
);

/* ---------- data ---------- */

const menus = ["Chrome", "File", "Edit", "View", "History", "Bookmarks", "People", "Tab", "Window", "Help"];

const bookmarks = [
  { name: "Google 캘린더 - 2...", icon: <Calendar />, width: 276 },
  { name: "Mail - Lee, Jung-ji...", icon: <Outlook />, width: 276 },
  { name: "leej39 | CHOP Mic...", icon: <SlackTile />, width: 276 },
  { name: "CHOP GitHub", icon: <GithubTile />, width: 204 },
  { name: "junglee0713 (Jung...", icon: <FaGithub size={32} color="#161414" />, width: 276 },
  { name: "2019 projects tim...", icon: <Sheets />, width: 276 },
  { name: "G Suite CHOP", icon: <DriveColor />, width: 206 },
  { name: "microb191-RStudio", icon: <RStudioOrb />, width: 276 },
];

type Mirror = [url: string, host: string];

const mirrors: { country?: string; sites: Mirror[] }[] = [
  { sites: [["https://cran.rediris.es/", "Spanish National Research Network, Madrid"]] },
  { country: "Sweden", sites: [["https://ftp.acc.umu.se/mirror/CRAN/", "Academic Computer Club, Umeå University"]] },
  { country: "Switzerland", sites: [["https://stat.ethz.ch/CRAN/", "ETH Zürich"]] },
  {
    country: "Taiwan",
    sites: [
      ["https://ftp.yzu.edu.tw/CRAN/", "Department of Computer Science and Engineering, Yuan Ze University"],
      ["http://cran.csie.ntu.edu.tw/", "National Taiwan University, Taipei"],
    ],
  },
  { country: "Thailand", sites: [["http://mirrors.psu.ac.th/pub/cran/", "Prince of Songkla University, Hatyai"]] },
  {
    country: "Turkey",
    sites: [
      ["https://cran.pau.edu.tr/", "Pamukkale University, Denizli"],
      ["https://cran.ncc.metu.edu.tr/", "Middle East Technical University Northern Cyprus Campus, Mersin"],
    ],
  },
  {
    country: "UK",
    sites: [
      ["https://www.stats.bris.ac.uk/R/", "University of Bristol"],
      ["https://cran.ma.imperial.ac.uk/", "Imperial College London"],
    ],
  },
  {
    country: "USA",
    sites: [
      ["https://cran.cnr.berkeley.edu/", "University of California, Berkeley, CA"],
      ["https://mirror.las.iastate.edu/CRAN/", "Iowa State University, Ames, IA"],
      ["https://ftp.ussg.iu.edu/CRAN/", "Indiana University"],
      ["https://rweb.crmda.ku.edu/cran/", "University of Kansas, Lawrence, KS"],
      ["https://cran.mtu.edu/", "Michigan Technological University, Houghton, MI"],
      ["https://repo.miserver.it.umich.edu/cran/", "MBNI, University of Michigan, Ann Arbor, MI"],
      ["http://cran.wustl.edu/", "Washington University, St. Louis, MO"],
      ["http://archive.linux.duke.edu/cran/", "Duke University, Durham, NC"],
      ["https://cran.case.edu/", "Case Western Reserve University, Cleveland, OH"],
      ["https://ftp.osuosl.org/pub/cran/", "Oregon State University"],
      ["http://lib.stat.cmu.edu/R/CRAN/", "Statlib, Carnegie Mellon University, Pittsburgh, PA"],
      ["http://cran.mirrors.hoobly.com/", "Hoobly Classifieds, Pittsburgh, PA"],
      ["https://mirrors.nics.utk.edu/cran/", "National Institute for Computational Sciences, Oak Ridge, TN"],
      ["https://cran.revolutionanalytics.com/", "Revolution Analytics, Dallas, TX"],
    ],
  },
  { country: "Uruguay", sites: [["https://espejito.fder.edu.uy/cran/", "Facultad de Derecho, Universidad de la República"]] },
];

const visitedUrl = "http://lib.stat.cmu.edu/R/CRAN/";

const apps: { name: string; icon: React.ReactNode; running?: boolean }[] = [
  { name: "Finder", icon: <Finder />, running: true },
  { name: "CHOP", icon: <Chop /> },
  { name: "Chrome", icon: <Chrome />, running: true },
  { name: "Word", icon: <Word />, running: true },
  { name: "Excel", icon: <Excel /> },
  { name: "PowerPoint", icon: <PowerPoint /> },
  { name: "Terminal", icon: <Terminal />, running: true },
  { name: "TextEdit", icon: <TextEdit /> },
  { name: "AnyConnect", icon: <AnyConnect />, running: true },
  { name: "RStudio", icon: <RStudio />, running: true },
  { name: "FileZilla", icon: <FileZilla /> },
  { name: "PyCharm", icon: <PyCharm /> },
  { name: "Notion", icon: <Notion />, running: true },
  { name: "KakaoTalk", icon: <KakaoTalk /> },
];

const stacks = [
  { name: "Downloads", icon: <Downloads /> },
  { name: "Folders", icon: <FolderStack /> },
  { name: "Minimised window", icon: <MiniWindow /> },
  { name: "Trash", icon: <Trash /> },
];

export default function App() {
  return (
    <Screen>
      <GlobalStyle />
      <MenuBar>
        <Menus>
          <Menu aria-label="Apple"><FaApple size={32} /></Menu>
          {menus.map((m, i) => <Menu key={m} $strong={i === 0}>{m}</Menu>)}
        </Menus>
        <StatusArea>
          <StatusItem $width={62} aria-label="VPN"><VpnStatus /></StatusItem>
          <StatusItem $width={56} aria-label="Dropbox"><FaDropbox size={38} /></StatusItem>
          <StatusItem $width={60} aria-label="Protection"><ShieldStatus /></StatusItem>
          <StatusItem $width={60} aria-label="Recorder"><RecordStatus /></StatusItem>
          <StatusItem $width={44} aria-label="Drive"><DriveStatus /></StatusItem>
          <StatusItem $width={68} aria-label="Wi-Fi"><WifiStatus /></StatusItem>
          <StatusItem $width={56} aria-label="AirPlay"><AirPlayStatus /></StatusItem>
          <StatusItem $width={60} aria-label="Volume"><SpeakerStatus /></StatusItem>
          <StatusItem $width={148}><Percent>100%</Percent><BatteryStatus /></StatusItem>
          <StatusItem $width={60} aria-label="Input source"><FlagStatus /></StatusItem>
          <StatusItem $width={212}>Tue 8:44 PM</StatusItem>
          <StatusItem $width={68} aria-label="Search"><SearchStatus /></StatusItem>
          <StatusItem $width={64} aria-label="Notifications"><ListStatus /></StatusItem>
        </StatusArea>
      </MenuBar>

      <BrowserWindow>
        <TabStrip>
          <Lights>
            <Light $fill="#ed6a5e" $edge="#d8574c" aria-label="Close window" />
            <Light $fill="#f5bf4f" $edge="#dea63a" aria-label="Minimise window" />
            <Light $fill="#61c554" $edge="#4cad3f" aria-label="Zoom window" />
          </Lights>
          <Tab $active>
            <RLogo />
            <TabTitle>CRAN - Mirrors</TabTitle>
            <IconButton aria-label="Close tab"><Close /></IconButton>
          </Tab>
          <Tab>
            <Calendar />
            <TabTitle $fade>Google 캘린더 - 2주, 2019년 12월</TabTitle>
            <IconButton aria-label="Close tab"><Close /></IconButton>
          </Tab>
          <TabDivider />
          <NewTab aria-label="New tab"><Plus /></NewTab>
        </TabStrip>

        <Toolbar>
          <IconGroup>
            <IconButton aria-label="Back"><Arrow /></IconButton>
            <IconButton aria-label="Forward"><Arrow forward /></IconButton>
            <IconButton aria-label="Reload"><Reload /></IconButton>
          </IconGroup>
          <AddressBar>
            <Lock />
            <AddressInput aria-label="Address" defaultValue="cran.r-project.org/mirrors.html" />
            <IconButton aria-label="Bookmark this page"><Star /></IconButton>
          </AddressBar>
          <IconGroup>
            <IconButton aria-label="AdBlock"><AdBlock /></IconButton>
            <IconButton aria-label="Orb"><GreyOrb /></IconButton>
            <IconButton aria-label="Grammar"><GTile /></IconButton>
            <IconButton aria-label="Help"><QuestionOrb /></IconButton>
            <IconButton aria-label="Drive"><DriveColor grey /></IconButton>
          </IconGroup>
          <Profile>
            <ThinLine />
            <Avatar aria-label="Profile"><Smiley /></Avatar>
          </Profile>
          <IconButton aria-label="Menu"><Dots /></IconButton>
        </Toolbar>

        <BookmarkBar>
          {bookmarks.map((b) => (
            <Bookmark key={b.name} href="#" $width={b.width}>{b.icon}{b.name}</Bookmark>
          ))}
          <BookmarkEnd>
            <IconButton aria-label="More bookmarks"><Chevrons /></IconButton>
            <ThinLine />
            <Bookmark href="#"><Folder />Other Bookmarks</Bookmark>
          </BookmarkEnd>
        </BookmarkBar>

        <Viewport>
          <MirrorList>
            {mirrors.map((group, i) => (
              <React.Fragment key={i}>
                {group.country && <Country>{group.country}</Country>}
                <MirrorGroup>
                  <MirrorTable>
                    <tbody>
                      {group.sites.map(([url, host]) => (
                        <tr key={url}>
                          <MirrorCell $share={45}>
                            <MirrorLink href={url} $visited={url === visitedUrl}>{url}</MirrorLink>
                          </MirrorCell>
                          <MirrorCell $share={55}>{host}</MirrorCell>
                        </tr>
                      ))}
                    </tbody>
                  </MirrorTable>
                </MirrorGroup>
              </React.Fragment>
            ))}
          </MirrorList>
          <Annotation width="750" height="200" viewBox="60 1300 750 200" aria-hidden="true">
            <ellipse cx="313" cy="1429" rx="236" ry="60" fill="none" stroke="#ee5140" strokeWidth="6" />
            <path d="M794 1307L548 1392" stroke="#ee5140" strokeWidth="6" />
            <path d="M525 1402l21-24 11 28z" fill="#ee5140" />
          </Annotation>
          <ScrollThumb />
        </Viewport>
      </BrowserWindow>

      <Desktop>
        <Rocks />
        <Dock>
          {apps.map((a) => (
            <DockItem key={a.name} aria-label={a.name}>
              {a.icon}
              {a.running && <RunningDot />}
            </DockItem>
          ))}
          <DockDivider />
          {stacks.map((a) => (
            <DockItem key={a.name} aria-label={a.name}>{a.icon}</DockItem>
          ))}
        </Dock>
        <Foliage />
      </Desktop>
    </Screen>
  );
}
